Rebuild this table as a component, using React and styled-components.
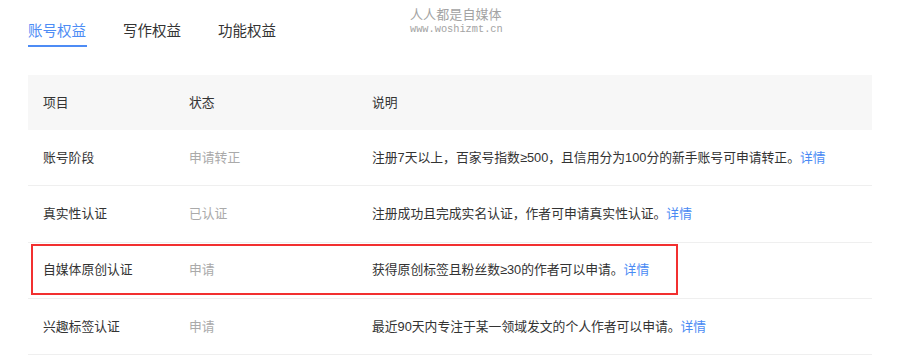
import styled, {createGlobalStyle} from 'styled-components';

const GlobalStyle = createGlobalStyle`
  html, body {
    margin: 0;
    padding: 0;
    background: #fff;
  }
  body {
    font-family: "Liberation Sans", "Noto Sans CJK SC", sans-serif;
    color: #333;
  }
`;

const rows = [
  {item: '账号阶段', status: '申请转正', desc: '注册7天以上，百家号指数≥500，且信用分为100分的新手账号可申请转正。'},
  {item: '真实性认证', status: '已认证', desc: '注册成功且完成实名认证，作者可申请真实性认证。'},
  {item: '自媒体原创认证', status: '申请', desc: '获得原创标签且粉丝数≥30的作者可以申请。', marked: true},
  {item: '兴趣标签认证', status: '申请', desc: '最近90天内专注于某一领域发文的个人作者可以申请。'},
];

const App = ({className}) => (
  <div className={className}>
    <GlobalStyle/>
    <Tabs>
      <Tab $active>账号权益</Tab>
      <Tab>写作权益</Tab>
      <Tab>功能权益</Tab>
    </Tabs>
    <Watermark>
      <span className='name'>人人都是自媒体</span>
      <span className='url'>www.woshizmt.cn</span>
    </Watermark>
    <Table>
      <HeadRow>
        <Cell>项目</Cell>
        <Cell>状态</Cell>
        <Cell>说明</Cell>
      </HeadRow>
      {rows.map(row => (
        <Row key={row.item}>
          <Cell>{row.item}</Cell>
          <Cell $muted>{row.status}</Cell>
          <Cell>{row.desc}<Link>详情</Link></Cell>
          {row.marked && <Marker/>}
        </Row>
      ))}
    </Table>
  </div>
);

const Tabs = styled.div`
  display: flex;
  gap: 37px;
  padding-left: 28px;
  height: 48px;
`;

const Tab = styled.div`
  position: relative;
  box-sizing: border-box;
  height: 48px;
  padding-top: 21px;
  font-size: 14.5px;
  line-height: 20px;
  color: ${p => (p.$active ? '#4d8cf5' : '#333')};

  &::after {
    content: '';
    display: ${p => (p.$active ? 'block' : 'none')};
    position: absolute;
    left: 0;
    right: -1px;
    bottom: 1px;
    height: 2px;
    background: #4d8cf5;
  }
`;

const Watermark = styled.div`
  position: absolute;
  top: 6px;
  left: 410px;
  display: flex;
  flex-direction: column;
  color: #a3a3a3;

  & .name {
    font-size: 13px;
    line-height: 17px;
    letter-spacing: 0.1px;
  }

  & .url {
    font-family: "Liberation Mono", monospace;
    font-size: 10.3px;
    line-height: 12px;
  }
`;

const Table = styled.div`
  margin: 27px 42px 0 28px;
  display: flex;
  flex-direction: column;
`;

const HeadRow = styled.div`
  display: grid;
  grid-template-columns: 146px 183px 1fr;
  align-items: center;
  height: 55px;
  background: #f7f7f7;
`;

const Row = styled.div`
  position: relative;
  display: grid;
  grid-template-columns: 146px 183px 1fr;
  align-items: center;
  height: 56.3px;
  box-sizing: border-box;
  border-bottom: 1px solid #efefef;
`;

const Cell = styled.div`
  padding-left: 15px;
  font-size: 12.8px;
  line-height: 18px;
  white-space: nowrap;
  color: ${p => (p.$muted ? '#aaa' : '#333')};
`;

const Link = styled.span`
  color: #4a8af4;
  cursor: pointer;
`;

const Marker = styled.div`
  position: absolute;
  left: 3px;
  top: 1px;
  width: 647px;
  height: 51px;
  box-sizing: border-box;
  border: 2px solid #f23030;
  pointer-events: none;
`;

export default styled(App)`
  position: relative;
  width: 914px;
  height: 356px;
  overflow: hidden;
  background: #fff;
`;
